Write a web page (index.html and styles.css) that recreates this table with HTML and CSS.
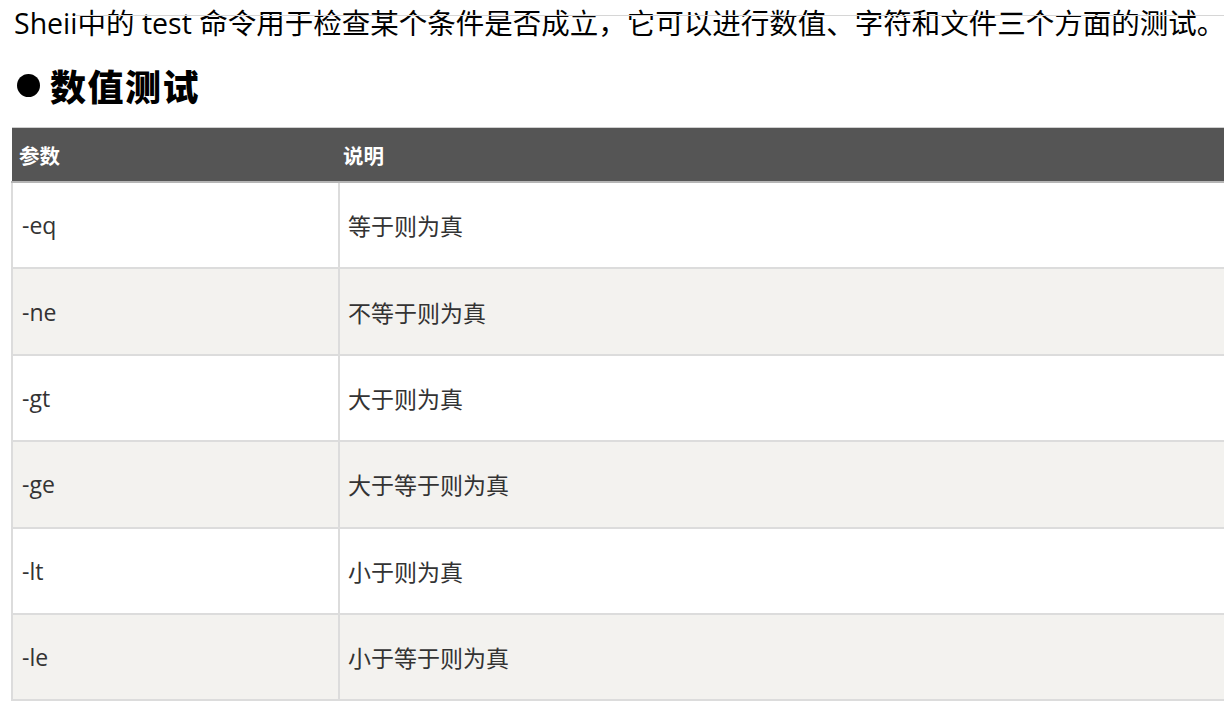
FILE: index.html
```html
<!DOCTYPE html>
<html lang="zh-CN">
<head>
<meta charset="utf-8">
<title>Shell test</title>
<link rel="stylesheet" href="styles.css">
</head>
<body>
<p class="intro">Sheii中的 test 命令用于检查某个条件是否成立，它可以进行数值、字符和文件三个方面的测试。</p>
<h2 class="title"><span class="dot"></span>数值测试</h2>
<table class="params">
  <thead>
    <tr><th class="c1">参数</th><th>说明</th></tr>
  </thead>
  <tbody>
    <tr><td class="c1">-eq</td><td>等于则为真</td></tr>
    <tr><td class="c1">-ne</td><td>不等于则为真</td></tr>
    <tr><td class="c1">-gt</td><td>大于则为真</td></tr>
    <tr><td class="c1">-ge</td><td>大于等于则为真</td></tr>
    <tr><td class="c1">-lt</td><td>小于则为真</td></tr>
    <tr><td class="c1">-le</td><td>小于等于则为真</td></tr>
  </tbody>
</table>
</body>
</html>
```
FILE: styles.css
```css
html, body {
  margin: 0;
  padding: 0;
  background: #ffffff;
  overflow: hidden;
}
body {
  width: 1224px;
  height: 722px;
  font-family: "Open Sans", "Noto Sans CJK SC", sans-serif;
  color: #000;
}
.intro {
  position: relative;
  margin: 0;
  padding: 4px 0 0 14px;
  font-size: 28.5px;
  line-height: 38px;
  white-space: nowrap;
}
.intro::after {
  content: "";
  position: absolute;
  left: 75px;
  right: 0;
  top: 15px;
  height: 1px;
  background: #d6d6d6;
}
.title {
  margin: 21px 0 0 17px;
  display: flex;
  align-items: center;
  gap: 10px;
  font-family: "Noto Sans CJK SC", sans-serif;
  font-weight: 900;
  font-size: 36px;
  line-height: 44px;
  letter-spacing: 1.5px;
}
.dot {
  width: 23px;
  height: 23px;
  border-radius: 50%;
  background: #000;
  flex: none;
}
.params {
  margin: 20px 0 0 11px;
  width: 1240px;
  border-collapse: collapse;
  font-family: "Open Sans", "Noto Sans CJK SC", sans-serif;
}
.params th {
  background: #555555;
  color: #fff;
  text-align: left;
  font-family: "Noto Sans CJK SC", sans-serif;
  font-weight: 700;
  font-size: 20.5px;
  height: 53px;
  padding: 0 0 0 7px;
  border-top: 1px solid #cfcfcf;
  border-bottom: 2px solid #b5b5b5;
}
.params th + th {
  padding-left: 4px;
}
.params .c1 {
  width: 316px;
}
.params td {
  height: 84.4px;
  padding: 0 0 0 8px;
  font-size: 23px;
  color: #333;
  border: 2px solid #dcdcdc;
  border-top: 0;
  vertical-align: middle;
}
.params td.c1 {
  padding-left: 9px;
}
.params tbody tr:nth-child(even) td {
  background: #f3f2ef;
}
```
